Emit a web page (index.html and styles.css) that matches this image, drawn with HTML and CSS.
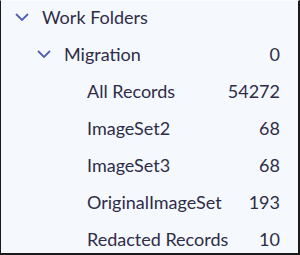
FILE: index.html
```html
<!DOCTYPE html>
<html>
<head>
<meta charset="utf-8">
<link rel="stylesheet" href="styles.css">
</head>
<body>
<div class="panel">
  <div class="row level0">
    <svg class="chev" width="14" height="8" viewBox="0 0 14 8"><path d="M1 1 L7 7 L13 1" fill="none" stroke="#5260b0" stroke-width="1.8"/></svg>
    <span class="label">Work Folders</span>
  </div>
  <div class="row level1">
    <svg class="chev" width="14" height="8" viewBox="0 0 14 8"><path d="M1 1 L7 7 L13 1" fill="none" stroke="#5260b0" stroke-width="1.8"/></svg>
    <span class="label">Migration</span>
    <span class="count">0</span>
  </div>
  <div class="row level2"><span class="label">All Records</span><span class="count">54272</span></div>
  <div class="row level2"><span class="label">ImageSet2</span><span class="count">68</span></div>
  <div class="row level2"><span class="label">ImageSet3</span><span class="count">68</span></div>
  <div class="row level2"><span class="label">OriginalImageSet</span><span class="count">193</span></div>
  <div class="row level2"><span class="label">Redacted Records</span><span class="count">10</span></div>
</div>
</body>
</html>
```
FILE: styles.css
```css
html, body {
  margin: 0;
  padding: 0;
}
.panel {
  box-sizing: border-box;
  width: 300px;
  height: 255px;
  background: #f5f9fd;
  border-left: 1px solid #1a1a1a;
  border-right: 2px solid #1a1a1a;
  border-bottom: 2px solid #1a1a1a;
  border-top: 1px solid #fbfdff;
  padding: 0 18px 0 0;
  font-family: Lato, "Noto Sans", sans-serif;
  font-size: 18px;
  color: #2f2c48;
  overflow: hidden;
  display: flex;
  flex-direction: column;
}
.row {
  display: flex;
  align-items: center;
  height: 37px;
  flex: none;
}
.level0 {
  margin-top: -3px;
  padding-left: 14px;
}
.level1 {
  padding-left: 36px;
}
.level2 {
  padding-left: 86px;
}
.chev {
  flex: none;
  margin-right: 13px;
}
.label {
  flex: 1;
  white-space: nowrap;
}
.count {
  flex: none;
}
```
